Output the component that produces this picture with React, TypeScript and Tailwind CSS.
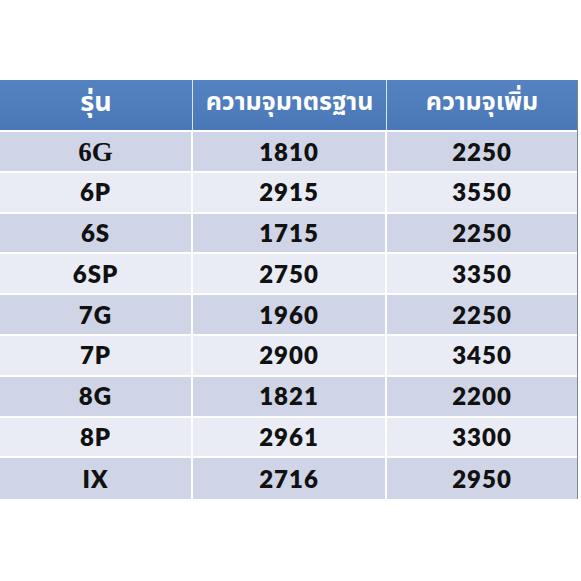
import React from "react";

const rows: [string, string, string][] = [
  ["6G", "1810", "2250"],
  ["6P", "2915", "3550"],
  ["6S", "1715", "2250"],
  ["6SP", "2750", "3350"],
  ["7G", "1960", "2250"],
  ["7P", "2900", "3450"],
  ["8G", "1821", "2200"],
  ["8P", "2961", "3300"],
  ["IX", "2716", "2950"],
];

export default function App() {
  return (
    <div className="w-[581px] h-[581px] bg-white pt-[80px]">
      <div className="w-[578px] border-r border-[#7f8796]">
        <div className="grid grid-cols-[193px_194px_1fr] h-[52px] bg-gradient-to-b from-[#5583c2] to-[#4a78b6] text-white font-bold text-[25px] border-b-2 border-white font-['Noto_Sans_Thai','Noto_Sans',Tahoma,sans-serif]">
          <div className="flex items-center justify-center border-r border-white/80 pb-1 text-[27px]">รุ่น</div>
          <div className="flex items-center justify-center border-r border-white/80 pb-1">ความจุมาตรฐาน</div>
          <div className="flex items-center justify-center pb-1">ความจุเพิ่ม</div>
        </div>
        {rows.map((r, i) => (
          <div
            key={r[0]}
            className={`grid grid-cols-[193px_194px_1fr] h-[40.8px] text-[24px] tracking-[1px] font-extrabold text-[#111] font-['Lato','Open_Sans',sans-serif] ${
              i % 2 === 0 ? "bg-[#cfd5e6]" : "bg-[#e9ecf5]"
            } ${i < rows.length - 1 ? "border-b-2 border-white" : ""}`}
          >
            {i === 0 ? (
              <div className="flex items-center justify-center border-r-2 border-white font-['Liberation_Serif',serif] font-bold text-[27px] tracking-normal">
                {r[0]}
              </div>
            ) : (
              <div className="flex items-center justify-center border-r-2 border-white">{r[0]}</div>
            )}
            <div className="flex items-center justify-center border-r-2 border-white">{r[1]}</div>
            <div className="flex items-center justify-center">{r[2]}</div>
          </div>
        ))}
      </div>
    </div>
  );
}
